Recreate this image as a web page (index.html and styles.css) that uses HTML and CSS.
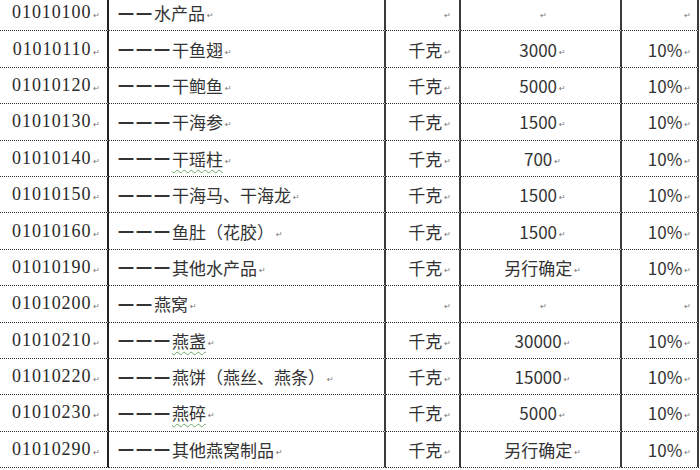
FILE: index.html
```html
<!DOCTYPE html>
<html lang="zh-CN">
<head>
<meta charset="utf-8">
<title>税目税率表</title>
<link rel="stylesheet" href="styles.css">
</head>
<body>
<div class="sheet">
  <div class="c code">01010100<span class="m">↵</span></div><div class="c name"><span class="d">一一</span>水产品<span class="m">↵</span></div><div class="c unit"><span class="m">↵</span></div><div class="c qty"><span class="m">↵</span></div><div class="c rate"><span class="m">↵</span></div>
  <div class="c code">01010110<span class="m">↵</span></div><div class="c name"><span class="d">一一一</span>干鱼翅<span class="m">↵</span></div><div class="c unit">千克<span class="m">↵</span></div><div class="c qty">3000<span class="m">↵</span></div><div class="c rate">10%<span class="m">↵</span></div>
  <div class="c code">01010120<span class="m">↵</span></div><div class="c name"><span class="d">一一一</span>干鲍鱼<span class="m">↵</span></div><div class="c unit">千克<span class="m">↵</span></div><div class="c qty">5000<span class="m">↵</span></div><div class="c rate">10%<span class="m">↵</span></div>
  <div class="c code">01010130<span class="m">↵</span></div><div class="c name"><span class="d">一一一</span>干海参<span class="m">↵</span></div><div class="c unit">千克<span class="m">↵</span></div><div class="c qty">1500<span class="m">↵</span></div><div class="c rate">10%<span class="m">↵</span></div>
  <div class="c code">01010140<span class="m">↵</span></div><div class="c name"><span class="d">一一一</span><span class="w">干瑶柱</span><span class="m">↵</span></div><div class="c unit">千克<span class="m">↵</span></div><div class="c qty">700<span class="m">↵</span></div><div class="c rate">10%<span class="m">↵</span></div>
  <div class="c code">01010150<span class="m">↵</span></div><div class="c name"><span class="d">一一一</span>干海马、干海龙<span class="m">↵</span></div><div class="c unit">千克<span class="m">↵</span></div><div class="c qty">1500<span class="m">↵</span></div><div class="c rate">10%<span class="m">↵</span></div>
  <div class="c code">01010160<span class="m">↵</span></div><div class="c name"><span class="d">一一一</span>鱼肚（花胶）<span class="m">↵</span></div><div class="c unit">千克<span class="m">↵</span></div><div class="c qty">1500<span class="m">↵</span></div><div class="c rate">10%<span class="m">↵</span></div>
  <div class="c code">01010190<span class="m">↵</span></div><div class="c name"><span class="d">一一一</span>其他水产品<span class="m">↵</span></div><div class="c unit">千克<span class="m">↵</span></div><div class="c qty">另行确定<span class="m">↵</span></div><div class="c rate">10%<span class="m">↵</span></div>
  <div class="c code">01010200<span class="m">↵</span></div><div class="c name"><span class="d">一一</span>燕窝<span class="m">↵</span></div><div class="c unit"><span class="m">↵</span></div><div class="c qty"><span class="m">↵</span></div><div class="c rate"><span class="m">↵</span></div>
  <div class="c code">01010210<span class="m">↵</span></div><div class="c name"><span class="d">一一一</span><span class="w">燕盏</span><span class="m">↵</span></div><div class="c unit">千克<span class="m">↵</span></div><div class="c qty">30000<span class="m">↵</span></div><div class="c rate">10%<span class="m">↵</span></div>
  <div class="c code">01010220<span class="m">↵</span></div><div class="c name"><span class="d">一一一</span>燕饼（燕丝、燕条）<span class="m">↵</span></div><div class="c unit">千克<span class="m">↵</span></div><div class="c qty">15000<span class="m">↵</span></div><div class="c rate">10%<span class="m">↵</span></div>
  <div class="c code">01010230<span class="m">↵</span></div><div class="c name"><span class="d">一一一</span><span class="w">燕碎</span><span class="m">↵</span></div><div class="c unit">千克<span class="m">↵</span></div><div class="c qty">5000<span class="m">↵</span></div><div class="c rate">10%<span class="m">↵</span></div>
  <div class="c code">01010290<span class="m">↵</span></div><div class="c name"><span class="d">一一一</span>其他燕窝制品<span class="m">↵</span></div><div class="c unit">千克<span class="m">↵</span></div><div class="c qty">另行确定<span class="m">↵</span></div><div class="c rate">10%<span class="m">↵</span></div>
</div>
</body>
</html>
```
FILE: styles.css
```css
html, body {
  margin: 0;
  padding: 0;
  background: #fff;
  overflow: hidden;
}
.sheet {
  display: grid;
  grid-template-columns: 109px 277px 75px 161px 77px;
  grid-auto-rows: 36.4px;
  margin-top: -5px;
  width: 699px;
  color: #333;
  font-family: "Noto Sans CJK SC", "Noto Sans", sans-serif;
  font-size: 17px;
}
.c {
  box-sizing: border-box;
  display: flex;
  align-items: center;
  border-bottom: 1px dotted #2a2a2a;
  border-right: 2px solid #3a3a3a;
  white-space: nowrap;
  overflow: hidden;
}
.code {
  justify-content: flex-end;
  padding-right: 7px;
  font-family: "Liberation Serif", serif;
  font-size: 18px;
  letter-spacing: 0.9px;
  color: #2a2a2a;
  border-right-color: #222;
}
.name {
  padding-left: 9px;
}
.d {
  font-size: 16px;
  font-weight: 700;
  letter-spacing: 2px;
  margin-right: 0;
}
.unit {
  justify-content: flex-end;
  padding-right: 8px;
}
.qty {
  justify-content: center;
  padding-left: 4px;
}
.rate {
  justify-content: flex-end;
  padding-right: 6px;
}
.m {
  font-family: "DejaVu Sans", sans-serif;
  font-size: 8px;
  color: #777;
  letter-spacing: 0;
  margin-left: 2px;
  position: relative;
  top: 3px;
}
.w {
  text-decoration: underline wavy #6aa86a;
  text-decoration-thickness: 1px;
  text-underline-offset: 3px;
}
```
